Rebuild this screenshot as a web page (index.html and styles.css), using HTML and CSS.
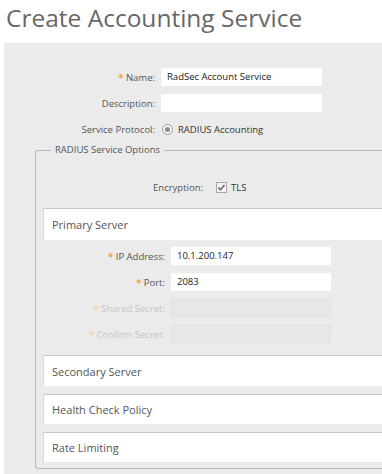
FILE: index.html
```html
<!DOCTYPE html>
<html>
<head>
<meta charset="utf-8">
<link rel="stylesheet" href="styles.css">
</head>
<body>
<div class="page">
  <h1 class="title">Create Accounting Service</h1>
  <div class="panel">
    <div class="row main">
      <label class="lbl"><span class="req">*</span> Name:</label>
      <div class="input">RadSec Account Service</div>
    </div>
    <div class="row main">
      <label class="lbl">Description:</label>
      <div class="input"></div>
    </div>
    <div class="row main">
      <label class="lbl">Service Protocol:</label>
      <span class="radio"><span class="dot"></span></span>
      <span class="val">RADIUS Accounting</span>
    </div>
    <fieldset class="options">
      <legend class="legend">RADIUS Service Options</legend>
      <div class="row enc">
        <label class="lbl">Encryption:</label>
        <svg class="check" width="11" height="11" viewBox="0 0 11 11">
          <rect x="0.5" y="0.5" width="10" height="10" fill="#f4f4f4" stroke="#a8a8a8"/>
          <path d="M2.5 5.5 L4.5 7.8 L8.5 3" fill="none" stroke="#6a6a6a" stroke-width="1.6"/>
        </svg>
        <span class="val">TLS</span>
      </div>
      <div class="section first">Primary Server</div>
      <div class="row sub top">
        <label class="lbl"><span class="req">*</span> IP Address:</label>
        <div class="input">10.1.200.147</div>
      </div>
      <div class="row sub">
        <label class="lbl"><span class="req">*</span> Port:</label>
        <div class="input">2083</div>
      </div>
      <div class="row sub disabled">
        <label class="lbl"><span class="req">*</span> Shared Secret:</label>
        <div class="input off"></div>
      </div>
      <div class="row sub disabled">
        <label class="lbl"><span class="req">*</span> Confirm Secret:</label>
        <div class="input off"></div>
      </div>
      <div class="section second">Secondary Server</div>
      <div class="section">Health Check Policy</div>
      <div class="section">Rate Limiting</div>
    </fieldset>
  </div>
</div>
</body>
</html>
```
FILE: styles.css
```css
html, body {
  margin: 0;
  padding: 0;
  background: #ffffff;
}
body {
  width: 382px;
  height: 474px;
  overflow: hidden;
  font-family: "Open Sans", "Noto Sans", sans-serif;
  color: #555;
}
.page {
  width: 382px;
}
.title {
  margin: 0;
  height: 43px;
  padding-left: 6px;
  font-family: "Open Sans", sans-serif;
  font-weight: 400;
  font-size: 24.5px;
  line-height: 36px;
  color: #686868;
  white-space: nowrap;
}
.panel {
  margin-left: 4px;
  background: #ebebeb;
  padding-top: 21px;
  height: 410px;
}
.row {
  display: flex;
  align-items: center;
  height: 26px;
  font-size: 9.5px;
}
.lbl {
  text-align: right;
  flex: none;
  color: #555;
  white-space: nowrap;
}
.main .lbl {
  width: 151px;
  margin-right: 6px;
}
.main .input {
  width: 161px;
}
.input {
  height: 18px;
  background: #fff;
  box-sizing: border-box;
  padding-left: 6px;
  line-height: 18px;
  font-size: 9.5px;
  color: #222;
}
.input.off {
  background: #e7e7e7;
  border: 1px solid #e0e0e0;
}
.req {
  color: #f0a040;
  font-weight: 700;
}
.radio {
  width: 9px;
  height: 9px;
  border-radius: 50%;
  border: 1px solid #999;
  background: #f6f6f6;
  display: flex;
  align-items: center;
  justify-content: center;
  margin-left: 1px;
  margin-right: 5px;
}
.dot {
  width: 5px;
  height: 5px;
  border-radius: 50%;
  background: #8a8a8a;
}
.val {
  color: #333;
}
.options {
  margin: 2px 0 0 31px;
  padding: 0 0 6px 7px;
  border: 1px solid #b8b8b8;
  border-right: none;
  border-radius: 3px 0 0 3px;
  min-width: 0;
}
.legend {
  margin-left: 8px;
  padding: 0 4px;
  font-size: 9.5px;
  line-height: 12px;
  color: #555;
}
.enc {
  margin-top: 18px;
}
.enc .lbl {
  width: 160px;
  margin-right: 13px;
}
.check {
  margin-right: 4px;
  flex: none;
}
.section {
  margin-top: 8px;
  height: 30px;
  box-sizing: border-box;
  background: #fff;
  border-top: 1px solid #c8c8c8;
  border-left: 1px solid #d8d8d8;
  padding-left: 8px;
  display: flex;
  align-items: center;
  font-size: 11px;
  color: #555;
}
.section.first {
  height: 32px;
}
.section.second {
  height: 31px;
}
.sub.top {
  margin-top: 3px;
}
.sub .lbl {
  width: 122px;
  margin-right: 6px;
}
.sub .input {
  width: 160px;
}
.disabled .lbl {
  color: #c4c4c4;
}
.disabled .req {
  color: #f5cfa0;
}
```
